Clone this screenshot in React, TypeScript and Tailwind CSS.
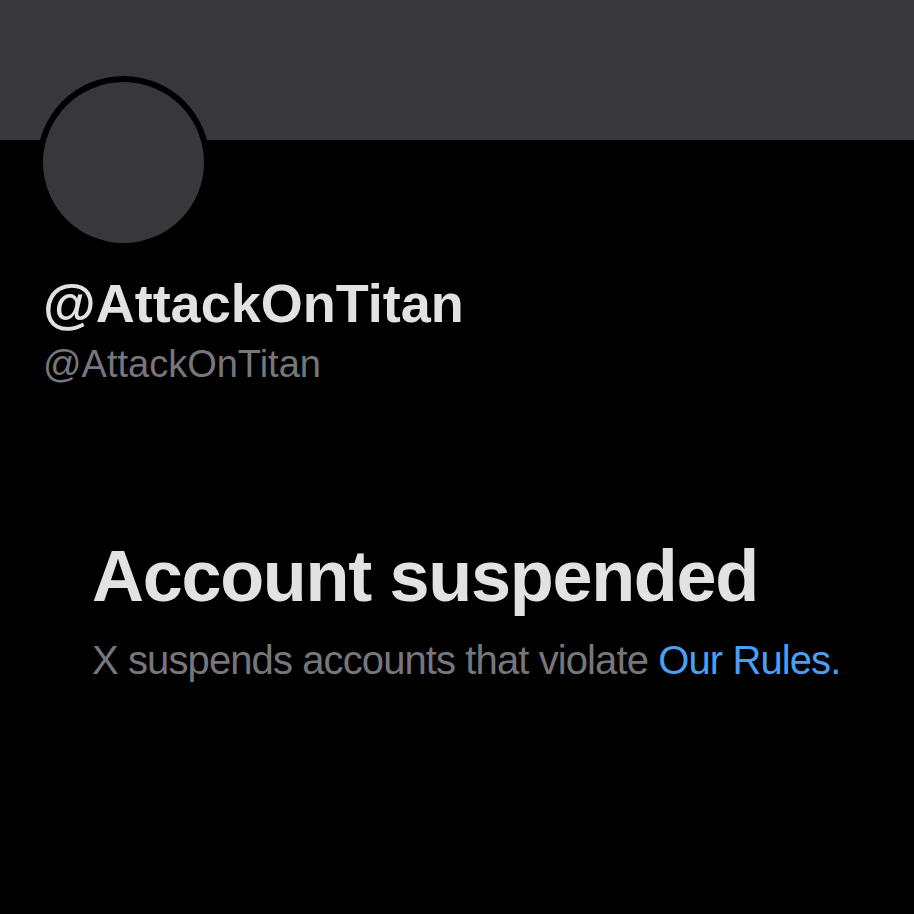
import React from 'react';

const App: React.FC = () => {
  const handle = '@AttackOnTitan';

  return (
    <div className="min-h-[914px] w-full bg-black font-['Liberation_Sans',Arial,sans-serif]">
      {/* header banner */}
      <div className="h-[140px] w-full bg-[#38383c]" />

      <div className="pl-[37px]">
        <div className="-mt-[64px] h-[173px] w-[173px] rounded-full bg-black p-[6px]">
          <div className="h-full w-full rounded-full bg-[#38383c]" />
        </div>
      </div>

      <div className="pl-[43px] pt-[27px]">
        <h1 className="text-[54px] font-bold leading-none text-[#e2e2e2]">{handle}</h1>
        <p className="mt-[15px] text-[38px] leading-none text-[#77777b]">{handle}</p>
      </div>

      <div className="pl-[92px] pt-[157px]">
        <h2 className="text-[72px] font-bold leading-none tracking-[-1.3px] text-[#e2e2e2]">
          Account suspended
        </h2>
        <p className="mt-[28px] text-[40px] leading-none tracking-[-0.9px] text-[#77777b]">
          X suspends accounts that violate <span className="text-[#4a9ff0]">Our Rules.</span>
        </p>
      </div>
    </div>
  );
};

export default App;
